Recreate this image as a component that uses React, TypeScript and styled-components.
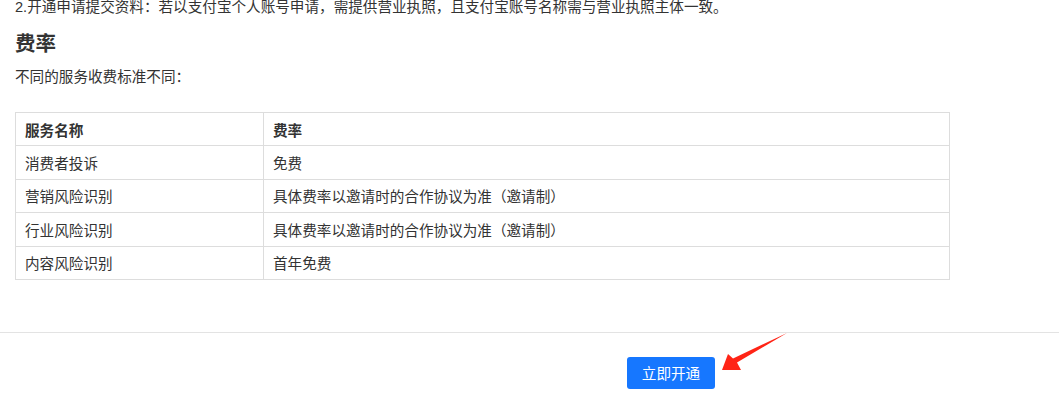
import styled, { createGlobalStyle } from "styled-components";

const Global = createGlobalStyle`
html, body {
  margin: 0;
  padding: 0;
  background: #fff;
  overflow: hidden;
}
body {
  font-family: "Liberation Sans", "Noto Sans CJK SC", sans-serif;
  font-size: 14.6px;
  color: #333;
}
`

const rows = [
    { name: "消费者投诉", fee: "免费" },
    { name: "营销风险识别", fee: "具体费率以邀请时的合作协议为准（邀请制）" },
    { name: "行业风险识别", fee: "具体费率以邀请时的合作协议为准（邀请制）" },
    { name: "内容风险识别", fee: "首年免费" },
]

export default function App() {
    return <Page>
        <Global />
        <Body>
            <Text>2.开通申请提交资料：若以支付宝个人账号申请，需提供营业执照，且支付宝账号名称需与营业执照主体一致。</Text>
            <Title>费率</Title>
            <Sub>不同的服务收费标准不同：</Sub>
            <Table>
                <colgroup>
                    <col style={{ width: 248 }} />
                    <col />
                </colgroup>
                <thead>
                    <tr>
                        <Th>服务名称</Th>
                        <Th>费率</Th>
                    </tr>
                </thead>
                <tbody>
                    {rows.map((r, i) => <tr key={i}>
                        <Td>{r.name}</Td>
                        <Td>{r.fee}</Td>
                    </tr>)}
                </tbody>
            </Table>
        </Body>
        <Footer>
            <Button>立即开通</Button>
            <Arrow width="80" height="46" viewBox="0 0 80 46">
                <polygon points="69,4 15,29.5 10,25 4,41 23,41 19,33.5" fill="#ff2416" />
            </Arrow>
        </Footer>
    </Page>
}

const Page = styled.div`
width: 1059px;
height: 404px;
display: flex;
flex-direction: column;
`

const Body = styled.div`
padding: 0 15px;
width: 935px;
`

const Text = styled.p`
margin: -4px 0 0;
line-height: 22px;
`

const Title = styled.h3`
margin: 12px 0 0;
font-size: 20.5px;
line-height: 28px;
font-weight: bold;
color: #333;
`

const Sub = styled.p`
margin: 8px 0 0;
line-height: 22px;
`

const Table = styled.table`
margin-top: 24px;
width: 935px;
border-collapse: collapse;
table-layout: fixed;
`

const Th = styled.th`
height: 32.4px;
padding: 0 9px;
border: 1px solid #ddd;
text-align: left;
font-weight: bold;
color: #333;
`

const Td = styled.td`
height: 32.4px;
padding: 0 9px;
border: 1px solid #ddd;
color: #333;
`

const Footer = styled.div`
position: relative;
margin-top: 52px;
border-top: 1px solid #e3e3e3;
padding: 24px 0 0 627px;
display: flex;
`

const Button = styled.div`
width: 88px;
height: 32px;
border-radius: 3px;
background-color: #1677ff;
color: #fff;
display: flex;
align-items: center;
justify-content: center;
font-size: 14.6px;
`

const Arrow = styled.svg`
position: absolute;
left: 718px;
top: -4px;
`
